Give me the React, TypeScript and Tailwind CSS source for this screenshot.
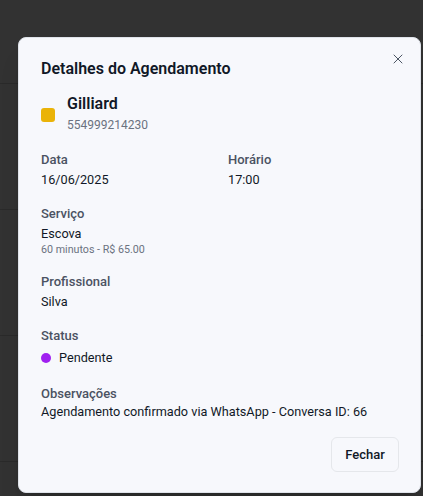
import { X } from 'lucide-react'

function Field({ label, children }: { label: string; children: React.ReactNode }) {
  return (
    <div>
      <div className="text-[13px] leading-[20px] font-medium text-[#4b5262]">{label}</div>
      {children}
    </div>
  )
}

export default function App() {
  return (
    <div
      className="relative w-[423px] h-[496px] overflow-hidden bg-[#323232]"
      style={{ fontFamily: 'Roboto, "Noto Sans", sans-serif' }}
    >
      {/* table rows behind the overlay */}
      <div className="flex flex-col">
        <div className="h-[84px] border-b border-[#2a2a2a]" />
        <div className="h-[126px] border-b border-[#2a2a2a]" />
        <div className="h-[126px] border-b border-[#2a2a2a]" />
        <div className="h-[126px] border-b border-[#2a2a2a]" />
      </div>

      {/* Modal */}
      <div className="absolute left-[18px] top-[37px] w-[403px] h-[456px] rounded-lg bg-[#f7f8fc] border border-[#dfe3ea] shadow-xl pl-[22px] pr-[21px] pt-[19px]">
        <button className="absolute right-[10px] top-[9px] p-1 text-[#4b5563]">
          <X className="w-4 h-4" strokeWidth={1.5} />
        </button>

        <h2 className="text-[16px] leading-[24px] font-semibold text-[#111827]">Detalhes do Agendamento</h2>

        <div className="mt-[12px] flex items-center gap-[12px]">
          <div className="w-[14px] h-[14px] rounded-[3px] bg-[#eab308] mt-[2px]" />
          <div>
            <div className="text-[16px] leading-[22px] font-semibold text-[#111827]">Gilliard</div>
            <div className="text-[12px] leading-[20px] text-[#6b7280]">554999214230</div>
          </div>
        </div>

        <div className="mt-[15px] grid grid-cols-2 gap-4">
          <Field label="Data">
            <div className="text-[12.7px] leading-[20px] text-[#111827]">16/06/2025</div>
          </Field>
          <Field label="Horário">
            <div className="text-[12.7px] leading-[20px] text-[#111827]">17:00</div>
          </Field>
        </div>

        <div className="mt-[14px]">
          <Field label="Serviço">
            <div className="text-[12.7px] leading-[20px] text-[#111827]">Escova</div>
            <div className="text-[10.7px] leading-[12px] text-[#6b7280]">60 minutos - R$ 65.00</div>
          </Field>
        </div>

        <div className="mt-[16px]">
          <Field label="Profissional">
            <div className="text-[12.7px] leading-[20px] text-[#111827]">Silva</div>
          </Field>
        </div>

        <div className="mt-[14px]">
          <Field label="Status">
            <div className="mt-[2px] flex items-center gap-[8px]">
              <span className="w-[10px] h-[10px] rounded-full bg-[#a020f0]" />
              <span className="text-[12.7px] leading-[20px] text-[#111827]">Pendente</span>
            </div>
          </Field>
        </div>

        <div className="mt-[16px]">
          <Field label="Observações">
            <div className="text-[12.7px] leading-[16px] text-[#111827]">
              Agendamento confirmado via WhatsApp - Conversa ID: 66
            </div>
          </Field>
        </div>

        <div className="mt-[17px] flex justify-end">
          <button className="h-[35px] w-[68px] rounded-md border border-[#e5e7eb] bg-[#f7f8fc] text-[13px] font-medium text-[#111827]">
            Fechar
          </button>
        </div>
      </div>
    </div>
  )
}
